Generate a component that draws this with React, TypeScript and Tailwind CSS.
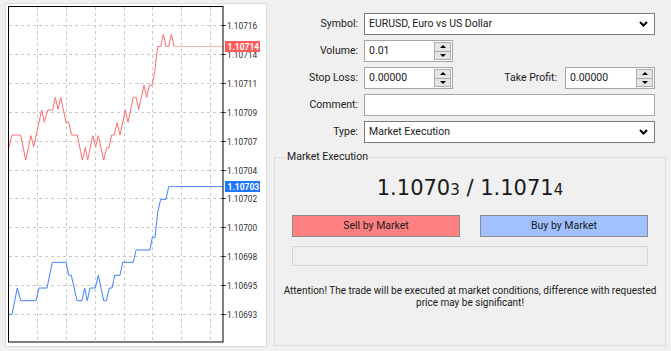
import React from "react";

const red: [number, number][] = [
  [8.7, 148.3], [12, 135], [20.7, 135], [25.7, 160], [31, 135.7], [33.7, 146.7], [41.7, 110], [44.3, 122.3],
  [47.7, 110], [52.7, 110], [55.3, 97.3], [58, 109.3], [60.7, 97.3], [66, 122.3], [68.7, 122.3], [71.7, 135],
  [77.3, 135], [82.3, 160], [85.3, 147.7], [87.7, 160], [92.7, 135.7], [95.7, 146.7], [98.3, 135.7], [103.7, 160],
  [106.7, 147.7], [109, 147.7], [111.7, 135], [114.3, 135], [117, 122.7], [120, 135], [125.3, 110], [128, 122.3],
  [133.3, 97.3], [136, 97.3], [138.7, 109.3], [144, 85.3], [146.7, 97.3], [149.3, 85.3], [152, 85.3], [154.7, 71.7],
  [157.7, 46.5], [160.7, 46.5], [163.3, 34.3], [166, 46.5], [168.7, 46.5], [171.3, 34.3], [174, 46.5],
];

const blue: [number, number][] = [
  [8.7, 314.3], [12, 314.3], [17.3, 288], [20.7, 300.7], [36, 300.7], [39, 288], [47, 288], [52.3, 262.3],
  [66, 262.3], [68.7, 275.3], [71.3, 275.3], [77, 300.7], [82, 300.7], [84.7, 288], [87.3, 300.7], [90, 288],
  [95.3, 288], [98.3, 275.3], [103.7, 300.7], [106.3, 300.7], [109.3, 288], [112, 288], [114.7, 275.3], [120, 275.3],
  [122.7, 262.3], [133.3, 262.3], [136, 250], [150, 250], [152.3, 237.3], [155, 237.3], [157.7, 212.3], [160.7, 199.3],
  [166, 199.3], [168.7, 186.5],
];

const levels = ["1.10716", "1.10714", "1.10711", "1.10709", "1.10707", "1.10704", "1.10702", "1.10700", "1.10698", "1.10695", "1.10693"];
const vx = [37.5, 66.5, 95.5, 124.5, 152.5, 181.5, 210.5];

const pts = (a: [number, number][]) => a.map(([x, y]) => `${x},${y}`).join(" ");

function Chart() {
  return (
    <svg width={260} height={342} viewBox="6 4 260 342" fontFamily="Roboto, sans-serif">
      {vx.map((x) => (
        <line key={x} x1={x} y1={7} x2={x} y2={342} stroke="#c9c9c9" strokeDasharray="3 3" strokeWidth={1} />
      ))}
      {levels.map((l, i) => {
        const y = Math.round(25 + i * 28.9) + 0.5;
        return (
          <g key={l}>
            <line x1={9} y1={y} x2={223} y2={y} stroke="#c9c9c9" strokeDasharray="3 3" strokeWidth={1} />
            <line x1={221} y1={y} x2={226} y2={y} stroke="#444" strokeWidth={1} />
            <text x={227} y={y + 3} fontSize={8.3} fill="#2e2e2e">{l}</text>
          </g>
        );
      })}
      <polyline points={pts(red)} fill="none" stroke="#ff6e6e" strokeWidth={1} />
      <line x1={174} y1={46.5} x2={223} y2={46.5} stroke="#ffb0b0" strokeWidth={1} />
      <polyline points={pts(blue)} fill="none" stroke="#3b82ff" strokeWidth={1} />
      <line x1={168.7} y1={186.5} x2={223} y2={186.5} stroke="#5c97ff" strokeWidth={1} />
      <rect x={8.5} y={6.5} width={214.5} height={335.5} fill="none" stroke="#000" strokeWidth={1} />
      <rect x={225} y={41} width={35} height={11} fill="#ff5a5a" />
      <text x={227.5} y={49.5} fontSize={8.5} fontWeight={700} fill="#fff">1.10714</text>
      <rect x={225} y={181} width={35} height={11} fill="#1f76ff" />
      <text x={227.5} y={189.5} fontSize={8.5} fontWeight={700} fill="#fff">1.10703</text>
    </svg>
  );
}

function Spin() {
  return (
    <div className="w-[17px] my-[1px] mr-[1px] flex flex-col shrink-0">
      <div className="flex-1 border border-[#adadad] bg-[#e5e5e5] flex items-center justify-center">
        <svg width="6" height="3" viewBox="0 0 6 3"><polygon points="0,3 6,3 3,0" fill="#000" /></svg>
      </div>
      <div className="flex-1 border border-[#adadad] border-t-0 bg-[#e5e5e5] flex items-center justify-center">
        <svg width="6" height="3" viewBox="0 0 6 3"><polygon points="0,0 6,0 3,3" fill="#000" /></svg>
      </div>
    </div>
  );
}

function Chevron() {
  return (
    <svg width="9" height="6" viewBox="0 0 9 6" className="mr-[6px] shrink-0">
      <polyline points="1,1 4.5,4.5 8,1" fill="none" stroke="#000" strokeWidth="2" />
    </svg>
  );
}

function NumInput({ value, w }: { value: string; w: string }) {
  return (
    <div className={`${w} h-[22px] border border-[#a6a6a6] bg-white flex items-stretch`}>
      <div className="flex-1 pl-[4px] flex items-center">{value}</div>
      <Spin />
    </div>
  );
}

export default function App() {
  return (
    <div className="w-[671px] h-[351px] bg-[#f0f0f0] flex overflow-hidden text-[10.5px] text-[#1a1a1a] font-['Roboto',sans-serif] leading-none">
      <div className="ml-[5px] mt-[3px] w-[262px] h-[344px] border border-[#dcdcdc] bg-white shrink-0">
        <Chart />
      </div>
      <div className="ml-[7px] w-[392px] flex flex-col shrink-0">
        <div className="mt-[13px] flex flex-col gap-[5px]">
          <div className="flex items-center h-[22px]">
            <div className="w-[84px] text-right">Symbol:</div>
            <div className="ml-[6px] w-[291px] h-[22px] border border-[#7a7a7a] bg-white flex items-center">
              <div className="flex-1 pl-[4px]">EURUSD, Euro vs US Dollar</div>
              <Chevron />
            </div>
          </div>
          <div className="flex items-center h-[22px]">
            <div className="w-[84px] text-right">Volume:</div>
            <div className="ml-[6px]">
              <NumInput value="0.01" w="w-[89px]" />
            </div>
          </div>
          <div className="flex items-center h-[22px]">
            <div className="w-[84px] text-right">Stop Loss:</div>
            <div className="ml-[6px]">
              <NumInput value="0.00000" w="w-[89px]" />
            </div>
            <div className="w-[104px] text-right">Take Profit:</div>
            <div className="ml-[8px]">
              <NumInput value="0.00000" w="w-[90px]" />
            </div>
          </div>
          <div className="flex items-center h-[22px]">
            <div className="w-[84px] text-right">Comment:</div>
            <div className="ml-[6px] w-[291px] h-[22px] border border-[#a6a6a6] bg-white" />
          </div>
          <div className="flex items-center h-[22px]">
            <div className="w-[84px] text-right">Type:</div>
            <div className="ml-[6px] w-[291px] h-[22px] border border-[#7a7a7a] bg-white flex items-center">
              <div className="flex-1 pl-[4px]">Market Execution</div>
              <Chevron />
            </div>
          </div>
        </div>
        <div className="mt-[14px] h-[189px] border border-[#dcdcdc] relative flex flex-col items-center">
          <div className="absolute left-[11px] -top-[7px] bg-[#f0f0f0] px-[1px] leading-[12px]">Market Execution</div>
          <div className="mt-[18px] font-['DejaVu_Sans',sans-serif] text-[21px] leading-[24px] text-[#1a1a1a]">
            1.1070<span className="text-[15px]">3</span> / 1.1071<span className="text-[15px]">4</span>
          </div>
          <div className="mt-[13px] flex gap-[20px]">
            <div className="w-[168px] h-[22px] border border-[#8a8a8a] bg-[#ff8080] flex items-center justify-center">Sell by Market</div>
            <div className="w-[168px] h-[22px] border border-[#8a8a8a] bg-[#a0c0ff] flex items-center justify-center">Buy by Market</div>
          </div>
          <div className="mt-[9px] w-[356px] h-[20px] border border-[#d6d6d6]" />
          <div className="mt-[19px] text-center text-[10px] leading-[12px] w-[388px]">
            Attention! The trade will be executed at market conditions, difference with requested price may be significant!
          </div>
        </div>
      </div>
    </div>
  );
}
